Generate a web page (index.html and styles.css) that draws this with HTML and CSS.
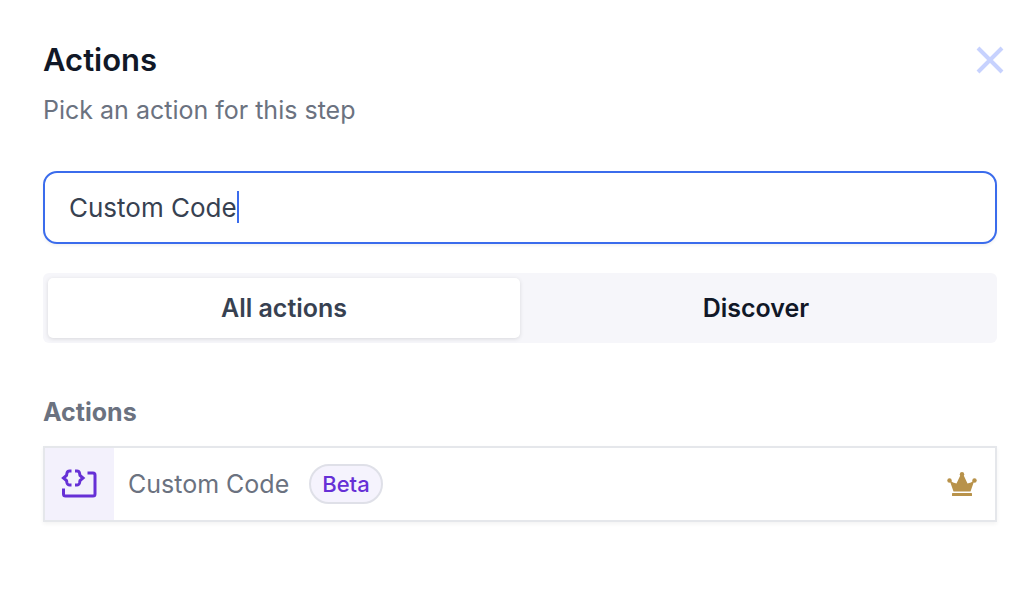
FILE: index.html
```html
<!DOCTYPE html>
<html lang="en">
<head>
    <meta charset="UTF-8">
    <meta name="viewport" content="width=device-width, initial-scale=1">
    <title>Actions</title>
    <link rel="stylesheet" href="styles.css">
</head>

<body>
  <main class="panel">
    <header class="panel-header">
      <h1>Actions</h1>
      <button type="button" class="button-close" aria-label="Close">
        <svg width="28" height="28" viewBox="0 0 28 28"><path d="M2 2L26 26M26 2L2 26"/></svg>
      </button>
    </header>
    <p class="subtitle" id="subtitle">Pick an action for this step</p>

    <div class="search">
      <input type="text" class="search-input" value="Custom Code" aria-labelledby="subtitle">
      <span class="caret"></span>
    </div>

    <div class="tabs" role="tablist">
      <button type="button" class="tab tab-active" role="tab" aria-selected="true">All actions</button>
      <button type="button" class="tab" role="tab" aria-selected="false">Discover</button>
    </div>

    <h2>Actions</h2>
    <button type="button" class="action">
      <span class="action-icon">
        <svg width="38" height="30" viewBox="0 0 38 30">
          <path d="M10.5 2H8.500Q6.500 2 6 4L5.500 6.500L2.500 9L5.500 11.500L6 14Q6.500 16 8.500 16H10.500"/>
          <path d="M14 2H16Q18 2 18.500 4L19 6.500L22 9L19 11.500L18.500 14Q18 16 16 16H14"/>
          <path d="M26.500 4H32Q34 4 34 6V25Q34 27 32 27H4.500Q2.500 27 2.500 25V19.500"/>
        </svg>
      </span>
      <span class="action-name">Custom Code</span>
      <span class="badge">Beta</span>
      <svg class="crown" width="30" height="24" viewBox="0 0 30 24">
        <circle cx="15" cy="2.300" r="2.200"/>
        <circle cx="2.500" cy="8.500" r="2.200"/>
        <circle cx="27.500" cy="8.500" r="2.200"/>
        <path d="M2.500 8L6 10.500L9.500 11.500L13.500 3H16.500L20.500 11.500L24 10.500L27.500 8L23.500 19.500H6.500Z"/>
        <rect x="5" y="21" width="20" height="3" rx="0.500"/>
      </svg>
    </button>
  </main>
</body>
</html>
```
FILE: styles.css
```css
* {
	box-sizing: border-box;
}
body {
	margin: 0;
	background: #fff;
	color: #111827;
	font-family: Inter, "Liberation Sans", sans-serif;
}
button {
	font-family: inherit;
	cursor: pointer;
}
svg {
	display: block;
	fill: none;
}
h1, h2, p {
	margin: 0;
}

.panel {
	padding: 40px 27px 40px 43px;
}
.panel-header {
	display: flex;
	align-items: center;
	justify-content: space-between;
	margin-right: -7px;
}
h1 {
	font-size: 31px;
	line-height: 40px;
	font-weight: 600;
}
.button-close {
	padding: 0;
	border: none;
	background: none;
}
.button-close svg {
	stroke: #c7d2fe;
	stroke-width: 4;
}
.subtitle {
	margin-top: 12px;
	font-size: 25px;
	line-height: 36px;
	color: #6b7280;
}

.search {
	position: relative;
	margin-top: 43px;
}
.search-input {
	display: block;
	width: 100%;
	height: 73px;
	padding: 0 24px;
	border: 2px solid #3b6cec;
	border-radius: 14px;
	background: #fff;
	box-shadow: 0 2px 3px rgba(0, 0, 0, 0.05);
	color: #374151;
	font-family: inherit;
	font-size: 26px;
	outline: none;
}
/* text cursor at the end of the typed query */
.caret {
	position: absolute;
	top: 20px;
	left: 194px;
	width: 2px;
	height: 32px;
	background: #3b6cec;
}

.tabs {
	display: flex;
	margin-top: 29px;
	padding: 5px;
	border-radius: 6px;
	background: #f6f6fa;
}
.tab {
	flex: 1;
	height: 60px;
	padding: 0;
	border: none;
	border-radius: 5px;
	background: none;
	color: #111827;
	font-size: 25px;
	font-weight: 600;
}
.tab-active {
	background: #fff;
	box-shadow: 0 1px 4px rgba(0, 0, 0, 0.12);
	color: #374151;
}

h2 {
	margin-top: 53px;
	font-size: 25px;
	line-height: 32px;
	font-weight: 700;
	color: #6b7280;
}
.action {
	display: flex;
	align-items: center;
	width: 100%;
	height: 76px;
	margin-top: 18px;
	padding: 0 18px 0 0;
	border: 2px solid #e5e7eb;
	background: #fff;
	box-shadow: 0 2px 4px rgba(0, 0, 0, 0.05);
	color: #6b7280;
	font-size: 25px;
}
.action-icon {
	display: flex;
	align-items: center;
	justify-content: center;
	align-self: stretch;
	width: 69px;
	background: #f3f1fc;
}
.action-icon svg {
	stroke: #6630d6;
	stroke-width: 3;
}
.action-name {
	margin-left: 14px;
}
.badge {
	margin-left: 20px;
	padding: 0 11px;
	border: 2px solid #dfe0e8;
	border-radius: 20px;
	background: #f5f3fd;
	color: #6630d6;
	font-size: 22px;
	line-height: 36px;
	font-weight: 500;
}
.crown {
	margin-left: auto;
	fill: #b8924a;
}
```
